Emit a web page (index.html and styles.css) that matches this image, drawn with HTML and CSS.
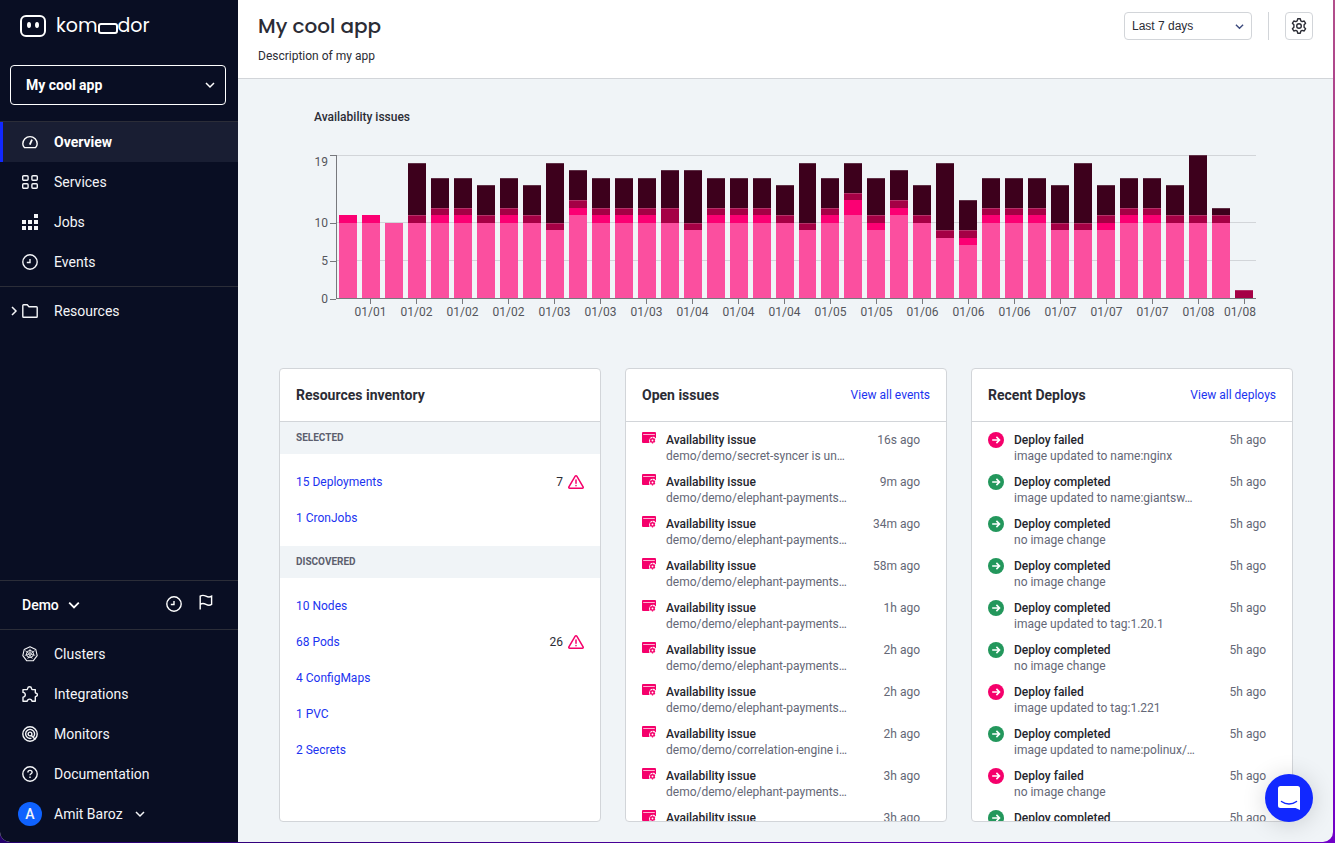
FILE: index.html
```
<!DOCTYPE html>
<html lang="en">
<head>
<meta charset="utf-8">
<title>Komodor – My cool app</title>
<link rel="stylesheet" href="styles.css">
</head>
<body>
<svg class="sprite" aria-hidden="true">
  <symbol id="chevron" viewBox="0 0 10 10"><path d="M1 3l4 4 4-4" fill="none" stroke="currentColor" stroke-width="1.5"/></symbol>
  <symbol id="clock" viewBox="0 0 16 16"><g fill="none" stroke="currentColor" stroke-width="1.4"><circle cx="8" cy="8" r="7.2"/><path d="M8 4.9v3.6H4.8"/></g></symbol>
  <symbol id="warning" viewBox="0 0 16 16"><g fill="none" stroke="#f5006b" stroke-width="1.5" stroke-linejoin="round" stroke-linecap="round"><path d="M7.2 2.1.9 12.9c-.3.7 0 1.3.8 1.3h12.6c.8 0 1.1-.6.8-1.3L8.8 2.1c-.4-.6-1.2-.6-1.6 0z"/><path d="M8 6v3.3M8 11.5v.2"/></g></symbol>
  <symbol id="issue" viewBox="0 0 14 14"><path d="M1 0h12a1 1 0 0 1 1 1v5.500l-2-1.700-3 .2-1.500 2-.5 2 .5 2H1a1 1 0 0 1-1-1V1a1 1 0 0 1 1-1z" fill="#f5006b"/><path d="M1.200 2.500h11.600" stroke="#ffb3d3" stroke-width="1"/><circle cx="10.500" cy="8.500" r="1.700" fill="#fff" stroke="#f5006b" stroke-width="1.500"/><path d="M10.500 5.600v1M10.500 10.400v1M8 7l.9.600M12.100 9.400l.9.600M8 10l.9-.6M12.100 7.600l.9-.6" stroke="#f5006b" stroke-width="1.300"/></symbol>
  <symbol id="deploy" viewBox="0 0 16 16"><circle cx="8" cy="8" r="8" fill="currentColor"/><path d="M4.2 8h7M8.4 4.9 11.5 8l-3.1 3.1" fill="none" stroke="#fff" stroke-width="1.6"/></symbol>
</svg>

<div class="app">
  <aside class="sidebar">
    <div class="brand" role="img" aria-label="komodor">
      <svg class="brand-icon" viewBox="0 0 26 22"><rect x="1" y="1" width="24" height="20" rx="5" fill="none" stroke="#fff" stroke-width="2"/><ellipse cx="9" cy="10" rx="2" ry="3" fill="#fff"/><ellipse cx="17" cy="10" rx="2" ry="3" fill="#fff"/></svg>
      <span class="brand-name"><span>kom</span><i class="brand-box"></i><span>dor</span></span>
    </div>
    <div class="app-select">
      <select aria-label="Application"><option>My cool app</option></select>
      <svg class="chev"><use href="#chevron"/></svg>
    </div>
    <nav class="nav nav-main" aria-label="Application">
      <a class="nav-item active" href="#"><svg viewBox="0 0 16 16"><g fill="none" stroke="currentColor" stroke-width="1.4" stroke-linejoin="round"><path d="M2.4 13.6C1.3 12.6.8 11.200 .8 9.800a7.200 7.200 0 0 1 14.400 0c0 1.400-.5 2.800-1.600 3.800z"/><path d="M7.800 10.600 10 5.600" stroke-width="1.800"/></g></svg>Overview</a>
      <a class="nav-item" href="#"><svg viewBox="0 0 16 16"><g fill="none" stroke="currentColor" stroke-width="1.4"><rect x=".7" y="1.700" width="5.400" height="4.600" rx="1"/><rect x="9.900" y="1.700" width="5.400" height="4.600" rx="1"/><rect x=".7" y="9.700" width="5.400" height="4.600" rx="1"/><rect x="9.900" y="9.700" width="5.400" height="4.600" rx="1"/></g></svg>Services</a>
      <a class="nav-item" href="#"><svg viewBox="0 0 16 16"><path d="M12 0h4v4h-4zM0 6h4v4H0zM6 6h4v4H6zM12 6h4v4h-4zM0 12h4v4H0zM6 12h4v4H6zM12 12h4v4h-4z" fill="currentColor"/></svg>Jobs</a>
      <a class="nav-item" href="#"><svg><use href="#clock"/></svg>Events</a>
    </nav>
    <nav class="nav nav-resources" aria-label="Resources">
      <a class="nav-item expandable" href="#"><svg class="expand"><use href="#chevron"/></svg><svg viewBox="0 0 16 16"><path d="M.8 13.500V2.600c0-.5.3-.8.8-.8h3.600l1.800 2h7.400c.5 0 .8.3.8.8v8.900c0 .5-.3.800-.8.800H1.600c-.5 0-.8-.3-.8-.8z" fill="none" stroke="currentColor" stroke-width="1.400"/></svg>Resources</a>
    </nav>
    <div class="workspace">
      <button class="workspace-name" type="button">Demo<svg class="chev"><use href="#chevron"/></svg></button>
      <button class="icon-button" type="button" aria-label="History"><svg><use href="#clock"/></svg></button>
      <button class="icon-button flag" type="button" aria-label="Flags"><svg viewBox="0 0 16 16"><path d="M2.200 15.500V2.200c2-1.300 4-.9 5.800 0s3.800 1.100 5.600 0v8.200c-1.800 1.100-3.800.9-5.600 0s-3.800-1.300-5.800 0" fill="none" stroke="currentColor" stroke-width="1.400"/></svg></button>
    </div>
    <nav class="nav nav-account" aria-label="Account">
      <a class="nav-item" href="#"><svg viewBox="0 0 16 16"><g fill="none" stroke="currentColor"><path d="M8 .7 13.800 3.500 15.200 9.700 11.200 14.800H4.800L.8 9.700 2.200 3.500z" stroke-width="1.100" stroke-linejoin="round"/><circle cx="8" cy="8" r="3.500"/><circle cx="8" cy="8" r="1.200"/><path d="M8 2.800v4M8 9.200l2.300 3.500M8 9.200l-2.300 3.500M9 7.500l3.700-2.800M7 7.500 3.300 4.700M9.200 8.400l4 .9M6.800 8.400l-4 .9" stroke-width=".8"/></g></svg>Clusters</a>
      <a class="nav-item" href="#"><svg viewBox="0 0 16 16"><path d="M1 3.600h3.800c.6 0 .7-.5.800-1C5.800 1.300 6.600.8 7.600.8s1.800.5 2 1.800c.1.500.2 1 .8 1h2.900v2.900c0 .6.400.7.900.8.900.2 1.200.8 1.200 1.500s-.4 1.300-1.200 1.500c-.5.1-.9.3-.9.800v4.100H10c-.2-1.300-1-2.100-2.400-2.100s-2.200.8-2.400 2.100H1v-4c1.300-.2 2.300-1 2.300-2.400S2.300 6.600 1 6.400z" fill="none" stroke="currentColor" stroke-width="1.400" stroke-linejoin="round"/></svg>Integrations</a>
      <a class="nav-item" href="#"><svg viewBox="0 0 16 16"><g fill="none" stroke="currentColor" stroke-width="1.400"><circle cx="8" cy="8" r="7.200"/><path d="M11.400 11A4.500 4.500 0 1 0 9.500 12.200"/><circle cx="8" cy="8" r="1.900"/><path d="M9.400 9.400l4 4"/></g></svg>Monitors</a>
      <a class="nav-item" href="#"><svg viewBox="0 0 16 16"><g fill="none" stroke="currentColor" stroke-width="1.400"><circle cx="8" cy="8" r="7.200"/><path d="M5.900 6.500c0-1.300.9-2.100 2.100-2.100s2.100.8 2.100 1.900c0 1.400-2.100 1.500-2.100 3M8 10.500v1.500"/></g></svg>Documentation</a>
      <button class="nav-item user" type="button"><span class="avatar">A</span>Amit Baroz<svg class="chev"><use href="#chevron"/></svg></button>
    </nav>
  </aside>

  <main class="main">
    <header class="page-header">
      <div>
        <h1>My cool app</h1>
        <p>Description of my app</p>
      </div>
      <div class="tools">
        <div class="range-select">
          <select aria-label="Time range"><option>Last 7 days</option></select>
          <svg class="chev"><use href="#chevron"/></svg>
        </div>
        <span class="divider"></span>
        <button class="settings" type="button" aria-label="Settings"><svg viewBox="0 0 16 16"><g fill="none" stroke="currentColor" stroke-width="1.400" stroke-linejoin="round"><path d="M6.700.8h2.600l.5 2 1.400.8 2-.6 1.400 2.300-1.500 1.500v2.400l1.500 1.500-1.400 2.300-2-.6-1.400.8-.5 2H6.700l-.5-2-1.400-.8-2 .6-1.400-2.300 1.500-1.500V6.800L1.400 5.300 2.800 3l2 .6 1.400-.8z"/><circle cx="8" cy="8" r="2.300"/></g></svg></button>
      </div>
    </header>

    <section class="chart" aria-labelledby="chart-title">
      <h2 id="chart-title">Availability issues</h2>
      <div class="chart-grid">
        <div class="y-axis"><span>19</span><span>10</span><span>5</span><span>0</span></div>
        <div class="plot" id="plot"></div>
        <div class="x-axis" id="x-axis"></div>
      </div>
    </section>

    <div class="cards">
      <section class="card">
        <header class="card-header"><h2>Resources inventory</h2></header>
        <h3>SELECTED</h3>
        <ul class="inventory">
          <li><a href="#">15 Deployments</a><span class="alert">7<svg><use href="#warning"/></svg></span></li>
          <li><a href="#">1 CronJobs</a></li>
        </ul>
        <h3>DISCOVERED</h3>
        <ul class="inventory">
          <li><a href="#">10 Nodes</a></li>
          <li><a href="#">68 Pods</a><span class="alert">26<svg><use href="#warning"/></svg></span></li>
          <li><a href="#">4 ConfigMaps</a></li>
          <li><a href="#">1 PVC</a></li>
          <li><a href="#">2 Secrets</a></li>
        </ul>
      </section>

      <section class="card">
        <header class="card-header"><h2>Open issues</h2><a href="#">View all events</a></header>
        <ul class="events issues">
          <li><svg><use href="#issue"/></svg><div><strong>Availability issue</strong><p>demo/demo/secret-syncer is un…</p></div><time>16s ago</time></li>
          <li><svg><use href="#issue"/></svg><div><strong>Availability issue</strong><p>demo/demo/elephant-payments…</p></div><time>9m ago</time></li>
          <li><svg><use href="#issue"/></svg><div><strong>Availability issue</strong><p>demo/demo/elephant-payments…</p></div><time>34m ago</time></li>
          <li><svg><use href="#issue"/></svg><div><strong>Availability issue</strong><p>demo/demo/elephant-payments…</p></div><time>58m ago</time></li>
          <li><svg><use href="#issue"/></svg><div><strong>Availability issue</strong><p>demo/demo/elephant-payments…</p></div><time>1h ago</time></li>
          <li><svg><use href="#issue"/></svg><div><strong>Availability issue</strong><p>demo/demo/elephant-payments…</p></div><time>2h ago</time></li>
          <li><svg><use href="#issue"/></svg><div><strong>Availability issue</strong><p>demo/demo/elephant-payments…</p></div><time>2h ago</time></li>
          <li><svg><use href="#issue"/></svg><div><strong>Availability issue</strong><p>demo/demo/correlation-engine i…</p></div><time>2h ago</time></li>
          <li><svg><use href="#issue"/></svg><div><strong>Availability issue</strong><p>demo/demo/elephant-payments…</p></div><time>3h ago</time></li>
          <li><svg><use href="#issue"/></svg><div><strong>Availability issue</strong></div><time>3h ago</time></li>
        </ul>
      </section>

      <section class="card">
        <header class="card-header"><h2>Recent Deploys</h2><a href="#">View all deploys</a></header>
        <ul class="events deploys">
          <li class="failed"><svg><use href="#deploy"/></svg><div><strong>Deploy failed</strong><p>image updated to name:nginx</p></div><time>5h ago</time></li>
          <li><svg><use href="#deploy"/></svg><div><strong>Deploy completed</strong><p>image updated to name:giantsw…</p></div><time>5h ago</time></li>
          <li><svg><use href="#deploy"/></svg><div><strong>Deploy completed</strong><p>no image change</p></div><time>5h ago</time></li>
          <li><svg><use href="#deploy"/></svg><div><strong>Deploy completed</strong><p>no image change</p></div><time>5h ago</time></li>
          <li><svg><use href="#deploy"/></svg><div><strong>Deploy completed</strong><p>image updated to tag:1.20.1</p></div><time>5h ago</time></li>
          <li><svg><use href="#deploy"/></svg><div><strong>Deploy completed</strong><p>no image change</p></div><time>5h ago</time></li>
          <li class="failed"><svg><use href="#deploy"/></svg><div><strong>Deploy failed</strong><p>image updated to tag:1.221</p></div><time>5h ago</time></li>
          <li><svg><use href="#deploy"/></svg><div><strong>Deploy completed</strong><p>image updated to name:polinux/…</p></div><time>5h ago</time></li>
          <li class="failed"><svg><use href="#deploy"/></svg><div><strong>Deploy failed</strong><p>no image change</p></div><time>5h ago</time></li>
          <li><svg><use href="#deploy"/></svg><div><strong>Deploy completed</strong></div><time>5h ago</time></li>
        </ul>
      </section>
    </div>
  </main>
</div>
<button class="chat" type="button" aria-label="Open chat"><svg viewBox="0 0 22 24"><path d="M2.500 0h17A2.500 2.500 0 0 1 22 2.500V24l-4.500-2h-15A2.500 2.500 0 0 1 0 19.500v-17A2.500 2.500 0 0 1 2.500 0z" fill="#fff"/><path d="M3.500 15.500c4.500 3.400 10.500 3.400 15 0" fill="none" stroke="#1128ff" stroke-width="1.500" stroke-linecap="round"/></svg></button>
<script src="chart.js"></script>
</body>
</html>
```
FILE: styles.css
```
* { box-sizing: border-box; }
body {
  margin: 0;
  height: 100vh;
  padding: 0 2px 1px 0;
  overflow: hidden;
  font: 12px/16px Roboto, "Liberation Sans", sans-serif;
  color: #2b2c35;
  background: linear-gradient(to bottom, #b2508c, #a0208c 45%, transparent) right / 20px 100% no-repeat, linear-gradient(to right, #24006b, #7000c8);
}
h1, h2, h3, p, ul { margin: 0; padding: 0; }
ul { list-style: none; }
a { color: #1b33f0; text-decoration: none; }
button, select { font: inherit; color: inherit; margin: 0; padding: 0; border: 0; background: none; appearance: none; cursor: pointer; }
svg { display: block; width: 16px; height: 16px; flex: none; }
.sprite { display: none; }
.chev { width: 10px; height: 10px; pointer-events: none; }

.app { display: flex; height: 100%; border-radius: 0 0 10px 10px; overflow: hidden; background: #f0f4f7; }

/* Sidebar */
.sidebar { width: 238px; flex: none; display: flex; flex-direction: column; padding-bottom: 8px; background: #090e23; color: #fff; font-size: 14px; line-height: 20px; }
.brand { display: flex; align-items: center; gap: 10px; height: 52px; padding-left: 20px; }
.brand-icon { width: 26px; height: 22px; }
.brand-name { display: flex; align-items: center; font-family: Poppins, Lato, sans-serif; font-size: 19px; line-height: 24px; }
.brand-box { width: 20px; height: 11px; margin-top: 4px; border: 2px solid #fff; border-radius: 3px; }
.app-select { display: grid; align-items: center; margin: 13px 12px 16px 10px; }
.app-select > *, .range-select > * { grid-area: 1 / 1; }
.app-select select { width: 100%; height: 40px; padding: 0 15px; border: 1px solid #fff; border-radius: 4px; font-weight: 700; }
.app-select .chev { justify-self: end; margin-right: 11px; }
.nav { display: flex; flex-direction: column; }
.nav-main, .nav-resources, .workspace { border-top: 1px solid #2b2d38; }
.nav-resources { margin-top: 4px; padding-top: 4px; }
.nav-item { display: flex; align-items: center; gap: 16px; height: 40px; padding-left: 22px; color: #f4f5f8; text-align: left; }
.nav-item.active { padding-left: 19px; border-left: 3px solid #1128ff; background: #191e33; color: #fff; font-weight: 700; }
.nav-item.expandable { padding-left: 9px; }
.expand { width: 10px; height: 10px; margin-right: -13px; transform: rotate(-90deg); }
.workspace { display: flex; align-items: center; gap: 16px; height: 49px; margin-top: auto; padding: 0 24px 0 22px; }
.workspace-name { display: flex; align-items: center; gap: 9px; margin-right: auto; font-weight: 500; }
.workspace-name .chev { width: 12px; height: 12px; }
.icon-button { padding-bottom: 2px; }
.icon-button.flag { padding-bottom: 6px; }
.nav-account { border-top: 1px solid #2b2d38; padding-top: 4px; }
.nav-item.user { gap: 12px; padding-left: 18px; }
.avatar { width: 24px; height: 24px; border-radius: 50%; background: #0f62fe; font-weight: 500; line-height: 24px; text-align: center; }

/* Page header */
.main { flex: 1; min-width: 0; display: flex; flex-direction: column; }
.page-header { display: flex; justify-content: space-between; padding: 12px 20px 14px; background: #fff; border-bottom: 1px solid #d2d5d9; }
.page-header h1 { font: 500 20px/28px Poppins, Lato, sans-serif; }
.page-header p { margin-top: 8px; }
.tools { display: flex; align-items: center; gap: 16px; height: 28px; }
.range-select { display: grid; align-items: center; width: 128px; font-family: "Liberation Sans", Arial, sans-serif; }
.range-select select { height: 28px; padding: 0 7px; border: 1px solid #d2d5d9; border-radius: 4px; }
.range-select .chev { justify-self: end; width: 9px; height: 9px; margin-right: 8px; color: #3c4a7d; }
.divider { width: 1px; height: 28px; background: #d2d5d9; }
.settings { display: grid; place-items: center; width: 28px; height: 28px; border: 1px solid #d2d5d9; border-radius: 4px; }

/* Availability chart */
.chart { padding: 30px 77px 0 76px; }
.chart h2 { font-size: 12px; font-weight: 500; line-height: 16px; }
.chart-grid { display: grid; grid-template-columns: 22px 1fr; margin-top: 30px; color: #55565c; }
.y-axis { display: grid; grid-template-rows: minmax(0, 9fr) minmax(0, 5fr) minmax(0, 5fr) 0; height: 144px; text-align: right; }
.y-axis span { display: flex; justify-content: flex-end; align-items: flex-start; gap: 2px; height: 16px; margin-top: -8px; line-height: 16px; }
.y-axis span::after { content: ""; width: 6px; height: 1px; margin-top: 8px; background: #77787d; }
.y-axis span:first-child { margin-top: 0; padding-top: 0; line-height: 14px; }
.y-axis span:first-child::after { margin-top: 0; }
.plot {
  display: grid; grid-template-columns: repeat(40, 1fr); height: 144px;
  border-left: 1px solid #77787d; border-bottom: 1px solid #77787d;
  background:
    linear-gradient(#d2d5d9, #d2d5d9) 0 0 / 100% 1px no-repeat,
    linear-gradient(#d2d5d9, #d2d5d9) 0 47.4% / 100% 1px no-repeat,
    linear-gradient(#d2d5d9, #d2d5d9) 0 73.7% / 100% 1px no-repeat;
}
.bar { display: flex; flex-direction: column-reverse; margin: 0 3px 0 2px; }
.light { background: #fb4f9f; }
.hot { background: #fb0073; }
.crimson { background: #a50045; }
.dark { background: #3d001c; }
.dark, .crimson { box-shadow: inset 0 1px rgba(240, 244, 247, 0.2); }
.x-axis { grid-column: 2; display: grid; grid-template-columns: repeat(40, minmax(0, 1fr)); }
.x-axis span { display: flex; flex-direction: column; align-items: center; white-space: nowrap; }
.x-axis span::before { content: ""; width: 1px; height: 5px; background: #77787d; }
.x-axis span:last-child b { align-self: flex-end; }
.x-axis b { font-weight: 400; }

/* Cards */
.cards { flex: 1; min-height: 0; display: grid; grid-template-columns: repeat(3, minmax(0, 1fr)); gap: 24px; padding: 48px 40px 20px 41px; }
.card { min-height: 0; overflow: hidden; background: #fff; border: 1px solid #d2d5d9; border-radius: 4px; }
.card-header { display: flex; align-items: center; justify-content: space-between; height: 53px; padding: 0 16px; border-bottom: 1px solid #d2d5d9; }
.card h2 { font-size: 14px; line-height: 20px; font-weight: 700; }
.card h3 { padding: 1px 16px; background: #f0f4f7; font-size: 10px; line-height: 30px; font-weight: 700; color: #5c5f6e; }
.inventory { padding: 10px 16px; }
.inventory li { display: flex; align-items: center; justify-content: space-between; height: 36px; }
.alert { display: flex; align-items: center; gap: 5px; }
.events { padding: 10px 26px 0 16px; }
.events li { display: flex; align-items: flex-start; gap: 10px; height: 42px; color: #646776; }
.events div { flex: 1; min-width: 0; }
.events strong { display: block; font-weight: 500; color: #24252d; }
.events p { white-space: nowrap; }
.issues svg { width: 14px; height: 14px; }
.deploys svg { color: #23975c; }
.deploys .failed svg { color: #f5006b; }

.chat { position: fixed; right: 22px; bottom: 21px; display: grid; place-items: center; width: 48px; height: 48px; border-radius: 50%; background: #1128ff; box-shadow: 0 2px 24px rgba(0, 0, 0, 0.16); }
.chat svg { width: 22px; height: 24px; }
```
FILE: chart.js
```
// Issue counts per interval: light, hot, crimson, dark (bottom to top).
const intervals = [
  [10, 1, 0, 0], [10, 1, 0, 0], [10, 0, 0, 0], [10, 0, 1, 7], [10, 1, 1, 4],
  [10, 1, 1, 4], [10, 0, 1, 4], [10, 1, 1, 4], [10, 0, 1, 4], [9, 0, 1, 8],
  [11, 1, 1, 4], [10, 1, 1, 4], [10, 1, 1, 4], [10, 1, 1, 4], [10, 0, 2, 5],
  [9, 0, 1, 7], [10, 1, 1, 4], [10, 1, 1, 4], [10, 1, 1, 4], [10, 0, 1, 4],
  [9, 0, 1, 8], [10, 1, 1, 4], [11, 2, 1, 4], [9, 1, 1, 5], [11, 1, 1, 4],
  [10, 0, 1, 4], [8, 0, 1, 9], [7, 1, 1, 4], [10, 1, 1, 4], [10, 1, 1, 4],
  [10, 1, 1, 4], [9, 0, 1, 5], [9, 0, 1, 8], [9, 1, 1, 4], [10, 1, 1, 4],
  [10, 1, 1, 4], [10, 0, 1, 4], [10, 0, 1, 8], [10, 0, 1, 1], [0, 0, 1, 0]
];
const days = [1, 2, 2, 2, 3, 3, 3, 4, 4, 4, 5, 5, 6, 6, 6, 7, 7, 7, 8, 8];
const max = 19;
const series = ["light", "hot", "crimson", "dark"];
const plot = document.getElementById("plot");
const axis = document.getElementById("x-axis");

for (const counts of intervals) {
  const bar = document.createElement("div");
  bar.className = "bar";
  counts.forEach((count, i) => {
    if (!count) return;
    const part = document.createElement("div");
    part.className = series[i];
    part.style.height = (count / max * 100) + "%";
    bar.append(part);
  });
  plot.append(bar);
}

days.forEach((day, i) => {
  const tick = document.createElement("span");
  const label = document.createElement("b");
  label.textContent = "01/0" + day;
  tick.style.gridColumn = i * 2 + 2;
  tick.append(label);
  axis.append(tick);
});
```
